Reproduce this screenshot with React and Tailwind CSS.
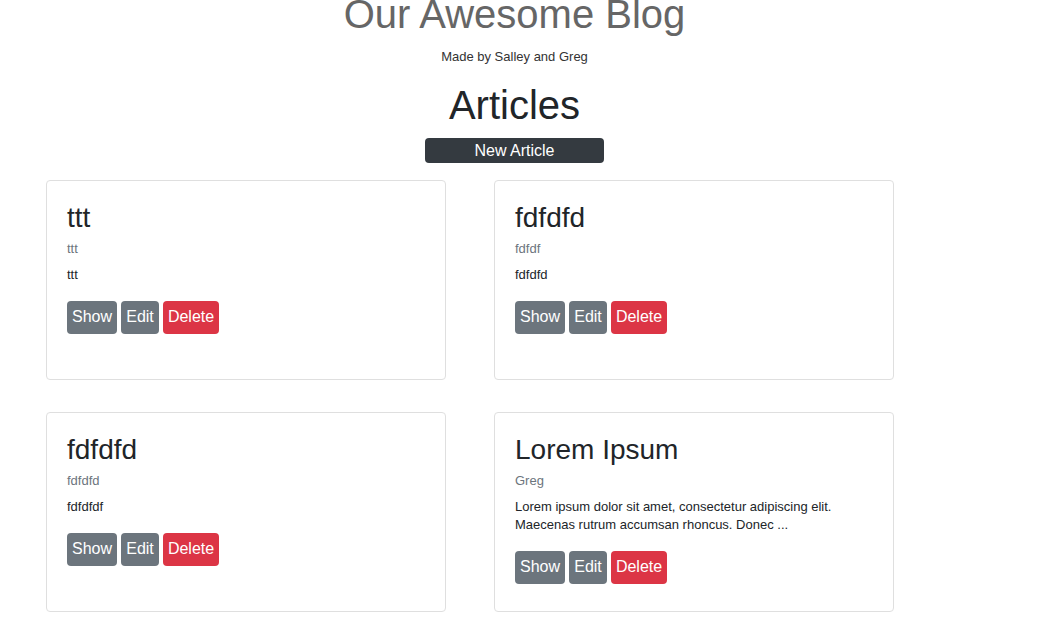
import React from "react";

const articles = [
    { title: "ttt", author: "ttt", body: "ttt" },
    { title: "fdfdfd", author: "fdfdf", body: "fdfdfd" },
    { title: "fdfdfd", author: "fdfdfd", body: "fdfdfdf" },
    {
        title: "Lorem Ipsum",
        author: "Greg",
        body: "Lorem ipsum dolor sit amet, consectetur adipiscing elit. Maecenas rutrum accumsan rhoncus. Donec ...",
    },
];

const ArticleCard = ({ article }) => {
    return (
        <div className="h-[200px] border border-[#dfdfdf] rounded-[4px] bg-white px-[20px] pt-[20px]">
            <h3 className="text-[28px] leading-[1.2] text-[#212529]">
                {article.title}
            </h3>
            <p className="mt-[5px] text-[13px] leading-[19.5px] text-[#6c757d]">
                {article.author}
            </p>
            <p className="mt-[7px] text-[13px] leading-[18px] text-[#212529] pr-[30px]">
                {article.body}
            </p>
            <div className="mt-[17px] flex gap-[4px]">
                <button className="w-[50px] h-[33px] rounded-[4px] bg-[#6c757d] text-white text-[16px]">
                    Show
                </button>
                <button className="w-[38px] h-[33px] rounded-[4px] bg-[#6c757d] text-white text-[16px]">
                    Edit
                </button>
                <button className="w-[56px] h-[33px] rounded-[4px] bg-[#dc3545] text-white text-[16px]">
                    Delete
                </button>
            </div>
        </div>
    );
};

export default function App() {
    return (
        <div className="w-[1037px] h-[625px] overflow-hidden bg-white font-['Liberation_Sans',Arial,sans-serif]">
            <div className="w-[1029px] flex flex-col items-center text-center">
                <h1 className="-mt-[10px] text-[40px] leading-[48px] text-[#666666]">
                    Our Awesome Blog
                </h1>
                <p className="mt-[9px] text-[13px] leading-[19.5px] text-[#333333]">
                    Made by Salley and Greg
                </p>
                <h2 className="mt-[14px] text-[40px] leading-[48px] text-[#212529]">
                    Articles
                </h2>
                <button className="mt-[9px] w-[179px] h-[25px] rounded-[4px] bg-[#343a40] text-white text-[16px] leading-[25px]">
                    New Article
                </button>
            </div>
            <div className="mt-[17px] pl-[46px] grid grid-cols-[400px_400px] gap-x-[48px] gap-y-[32px]">
                {articles.map((article, index) => (
                    <ArticleCard key={index} article={article} />
                ))}
            </div>
        </div>
    );
}
